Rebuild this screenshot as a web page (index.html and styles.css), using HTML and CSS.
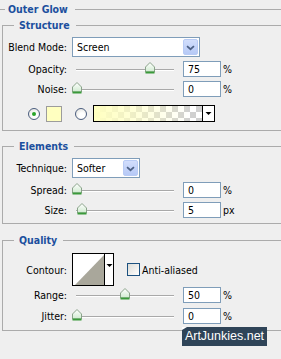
FILE: index.html
```html
<!DOCTYPE html>
<html>
<head>
<meta charset="utf-8">
<link rel="stylesheet" href="styles.css">
</head>
<body>
<fieldset class="outer">
  <legend class="title">Outer Glow</legend>

  <fieldset class="group structure">
    <legend class="title">Structure</legend>
    <div class="row r-select">
      <span class="lbl">Blend Mode:</span>
      <div class="select blend">
        <span class="sel-text">Screen</span>
        <span class="sel-btn"><svg width="15" height="17" viewBox="0 0 15 17"><polyline points="3.5,7 7.5,10.5 11.5,7" fill="none" stroke="#4d6185" stroke-width="2"/></svg></span>
      </div>
    </div>
    <div class="row r-slider">
      <span class="lbl">Opacity:</span>
      <div class="slider"><div class="track"></div><span class="thumb" style="left:73px"><svg width="10" height="12" viewBox="0 0 10 12"><defs><linearGradient id="tg1" x1="0" y1="0" x2="0" y2="1"><stop offset="0" stop-color="#ffffff"/><stop offset="1" stop-color="#cfeacf"/></linearGradient></defs><path d="M0.5,10 V5 L5,0.5 L9.5,5 V10 Z" fill="url(#tg1)" stroke="#8aa38a"/><rect x="0.5" y="9.5" width="9" height="2" fill="#3a9a3a"/></svg></span></div>
      <span class="num">75</span><span class="unit">%</span>
    </div>
    <div class="row r-slider">
      <span class="lbl">Noise:</span>
      <div class="slider"><div class="track"></div><span class="thumb" style="left:0px"><svg width="10" height="12" viewBox="0 0 10 12"><path d="M0.5,10 V5 L5,0.5 L9.5,5 V10 Z" fill="url(#tg1)" stroke="#8aa38a"/><rect x="0.5" y="9.5" width="9" height="2" fill="#3a9a3a"/></svg></span></div>
      <span class="num">0</span><span class="unit">%</span>
    </div>
    <div class="row r-color">
      <span class="radio checked"></span>
      <span class="swatch"></span>
      <span class="radio second"></span>
      <div class="gradient">
        <span class="grad-fill"></span>
        <span class="grad-btn"><svg width="11" height="15" viewBox="0 0 11 15"><path d="M2.5,6 H8.5 L5.5,9 Z" fill="#000"/></svg></span>
      </div>
    </div>
  </fieldset>

  <fieldset class="group elements">
    <legend class="title">Elements</legend>
    <div class="row r-select">
      <span class="lbl">Technique:</span>
      <div class="select tech">
        <span class="sel-text">Softer</span>
        <span class="sel-btn"><svg width="15" height="17" viewBox="0 0 15 17"><polyline points="3.5,7 7.5,10.5 11.5,7" fill="none" stroke="#4d6185" stroke-width="2"/></svg></span>
      </div>
    </div>
    <div class="row r-slider">
      <span class="lbl">Spread:</span>
      <div class="slider"><div class="track"></div><span class="thumb" style="left:0px"><svg width="10" height="12" viewBox="0 0 10 12"><path d="M0.5,10 V5 L5,0.5 L9.5,5 V10 Z" fill="url(#tg1)" stroke="#8aa38a"/><rect x="0.5" y="9.5" width="9" height="2" fill="#3a9a3a"/></svg></span></div>
      <span class="num">0</span><span class="unit">%</span>
    </div>
    <div class="row r-slider">
      <span class="lbl">Size:</span>
      <div class="slider"><div class="track"></div><span class="thumb" style="left:5px"><svg width="10" height="12" viewBox="0 0 10 12"><path d="M0.5,10 V5 L5,0.5 L9.5,5 V10 Z" fill="url(#tg1)" stroke="#8aa38a"/><rect x="0.5" y="9.5" width="9" height="2" fill="#3a9a3a"/></svg></span></div>
      <span class="num">5</span><span class="unit">px</span>
    </div>
  </fieldset>

  <fieldset class="group quality">
    <legend class="title">Quality</legend>
    <div class="row r-contour">
      <span class="lbl">Contour:</span>
      <div class="contour">
        <span class="contour-box"><svg width="31" height="31" viewBox="0 0 31 31"><polygon points="2,31 31,1 31,31" fill="#a9a79b"/></svg></span>
        <span class="contour-btn"><svg width="9" height="31" viewBox="0 0 9 31"><path d="M1.5,10 H7.5 L4.5,13 Z" fill="#000"/></svg></span>
      </div>
      <span class="check"></span>
      <span class="check-label">Anti-aliased</span>
    </div>
    <div class="row r-slider r-range">
      <span class="lbl">Range:</span>
      <div class="slider"><div class="track"></div><span class="thumb" style="left:48px"><svg width="10" height="12" viewBox="0 0 10 12"><path d="M0.5,10 V5 L5,0.5 L9.5,5 V10 Z" fill="url(#tg1)" stroke="#8aa38a"/><rect x="0.5" y="9.5" width="9" height="2" fill="#3a9a3a"/></svg></span></div>
      <span class="num">50</span><span class="unit">%</span>
    </div>
    <div class="row r-slider r-jitter">
      <span class="lbl">Jitter:</span>
      <div class="slider"><div class="track"></div><span class="thumb" style="left:0px"><svg width="10" height="12" viewBox="0 0 10 12"><path d="M0.5,10 V5 L5,0.5 L9.5,5 V10 Z" fill="url(#tg1)" stroke="#8aa38a"/><rect x="0.5" y="9.5" width="9" height="2" fill="#3a9a3a"/></svg></span></div>
      <span class="num">0</span><span class="unit">%</span>
    </div>
  </fieldset>
</fieldset>

<div class="watermark">ArtJunkies.net</div>
</body>
</html>
```

FILE: styles.css
```css
html, body {
  margin: 0;
  padding: 0;
  overflow: hidden;
}
body {
  width: 281px;
  height: 359px;
  position: relative;
  background: #efefef;
  color: #000;
  font-family: "DejaVu Sans Condensed", "DejaVu Sans", sans-serif;
  font-size: 10.5px;
}

fieldset {
  min-width: 0;
}

.outer {
  margin: 2px 0 0 0;
  padding: 0 0 0 2px;
  border: 1px solid #ababab;
  border-left: none;
  border-right: none;
  border-bottom: none;
}

.title {
  font-weight: bold;
  color: #1c4f9e;
  line-height: 14px;
  height: 14px;
  padding: 0 7px 0 3px;
  margin-left: 3px;
}

.group {
  margin: 2px 0 0 0;
  padding: 5px 0 8px 0;
  border: 1px solid #ababab;
  border-right: none;
}
.group > .title {
  margin-left: 11px;
  padding: 0 6px 0 5px;
}
.elements {
  margin-top: 8px;
  padding-bottom: 5px;
}
.quality {
  margin-top: 9px;
  padding-top: 6px;
  padding-bottom: 6px;
}

.row {
  display: flex;
  align-items: center;
}
.lbl {
  flex: none;
  width: 64px;
  margin-right: 5px;
  text-align: right;
  white-space: nowrap;
}

.r-select { height: 20px; }
.r-slider { height: 16px; margin-top: 4px; }
.r-range { margin-top: 1px; }
.r-jitter { margin-top: 5px; }

/* select */
.select {
  flex: none;
  box-sizing: border-box;
  height: 20px;
  border: 1px solid #7f9db9;
  background: #fff;
  display: flex;
  align-items: center;
  justify-content: space-between;
  padding: 0 1px 0 4px;
}
.blend { width: 128px; }
.tech { width: 68px; }
.sel-btn {
  width: 15px;
  height: 16px;
  box-sizing: border-box;
  border: 1px solid #b8cbf5;
  border-radius: 2px;
  background: linear-gradient(#d2defc, #b6c9f6);
  display: flex;
  align-items: center;
  justify-content: center;
}
.sel-btn svg { display: block; }

/* slider */
.slider {
  flex: none;
  position: relative;
  width: 106px;
  height: 16px;
  padding: 0 4px;
  box-sizing: border-box;
  display: flex;
  align-items: center;
}
.track {
  width: 100%;
  height: 1px;
  margin-top: 2px;
  background: #a9a9a9;
  border-bottom: 1px solid #fff;
}
.thumb {
  position: absolute;
  top: 1px;
  width: 10px;
  height: 12px;
}
.thumb svg { display: block; }

.num {
  flex: none;
  box-sizing: border-box;
  width: 38px;
  height: 16px;
  margin-left: 5px;
  padding-left: 4px;
  line-height: 14px;
  border: 1px solid #7f9db9;
  background: #fff;
}
.unit {
  margin-left: 2px;
}

/* color row */
.r-color {
  height: 17px;
  margin-top: 8px;
  padding-left: 25px;
}
.radio {
  flex: none;
  box-sizing: border-box;
  width: 12px;
  height: 12px;
  border-radius: 50%;
  border: 1px solid #4b5d7e;
  background: radial-gradient(circle at 60% 65%, #ffffff 30%, #dcdcd6 100%);
  display: flex;
  align-items: center;
  justify-content: center;
}
.radio.checked::after {
  content: "";
  width: 4px;
  height: 4px;
  border-radius: 50%;
  background: #2aa52a;
}
.swatch {
  flex: none;
  box-sizing: border-box;
  width: 16px;
  height: 16px;
  margin-left: 6px;
  background: #ffffc0;
  border: 1px solid #9c9c9c;
}
.radio.second { margin-left: 13px; }
.gradient {
  flex: none;
  box-sizing: border-box;
  width: 122px;
  height: 17px;
  margin-left: 6px;
  border: 1px solid #000;
  display: flex;
}
.grad-fill {
  flex: 1;
  background-color: #fff;
  background-image:
    linear-gradient(to right, #ffffc0 0%, rgba(255,255,192,0.6) 40%, rgba(255,255,192,0) 90%),
    linear-gradient(45deg, #d0d0d0 25%, transparent 25%, transparent 75%, #d0d0d0 75%),
    linear-gradient(45deg, #d0d0d0 25%, transparent 25%, transparent 75%, #d0d0d0 75%);
  background-size: 100% 100%, 12px 12px, 12px 12px;
  background-position: 0 0, 0 0, 6px 6px;
}
.grad-btn {
  flex: none;
  width: 11px;
  border-left: 1px solid #000;
  background: #fff;
}
.grad-btn svg { display: block; }

/* contour row */
.r-contour {
  height: 33px;
}
.contour {
  flex: none;
  display: flex;
  height: 33px;
}
.contour-box {
  box-sizing: border-box;
  width: 33px;
  height: 33px;
  border: 1px solid #000;
  background: #fff;
}
.contour-box svg, .contour-btn svg { display: block; }
.contour-btn {
  box-sizing: border-box;
  width: 9px;
  height: 33px;
  border: 1px solid #000;
  border-left: none;
  background: #fff;
}
.check {
  flex: none;
  box-sizing: border-box;
  width: 13px;
  height: 13px;
  margin-left: 13px;
  border: 1px solid #1c5180;
  background: linear-gradient(135deg, #dcdcd7, #ffffff);
}
.check-label {
  margin-left: 2px;
  white-space: nowrap;
}

/* watermark overlay */
.watermark {
  position: absolute;
  left: 182px;
  top: 327px;
  width: 85px;
  height: 19px;
  background: #2f4458;
  color: #fff;
  font-family: "Liberation Sans", Arial, sans-serif;
  font-size: 12.5px;
  line-height: 19px;
  text-align: center;
}
.watermark::before {
  content: "";
  position: absolute;
  left: 0;
  top: 0;
  width: 5px;
  height: 3px;
  background: #fff;
  clip-path: polygon(0 0, 100% 0, 0 100%);
}
```
